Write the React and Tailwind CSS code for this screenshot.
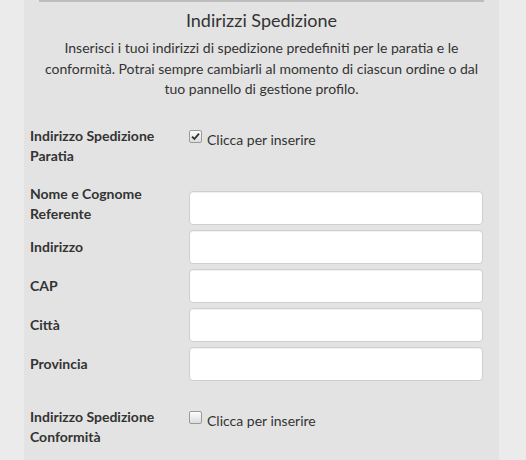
import React from "react";

const fields = ["Indirizzo", "CAP", "Città", "Provincia"];

function Check({ checked }) {
  return (
    <span className="mt-[4px] flex h-[13px] w-[13px] shrink-0 items-center justify-center rounded-[2px] border border-[#9a9a9a] bg-gradient-to-b from-[#fdfdfd] to-[#dcdcdc]">
      {checked && (
        <svg width="9" height="9" viewBox="0 0 9 9">
          <path d="M1 4.6 L3.4 7 L8 1.6" fill="none" stroke="#333" strokeWidth="1.8" />
        </svg>
      )}
    </span>
  );
}

function CheckRow({ label1, label2, checked }) {
  return (
    <div className="flex items-start">
      <div className="w-[159px] text-[14px] font-bold leading-[20px]">
        {label1}
        <br />
        {label2}
      </div>
      <label className="flex items-start gap-[5px]">
        <Check checked={checked} />
        <span className="mt-[5px] text-[14px] leading-[18px]">Clicca per inserire</span>
      </label>
    </div>
  );
}

function Input() {
  return (
    <div className="h-[34px] w-[294px] rounded-[4px] border border-[#cfcfcf] bg-white shadow-[inset_0_1px_1px_rgba(0,0,0,0.06)]" />
  );
}

export default function App() {
  return (
    <div className="min-h-[460px] w-[526px] bg-[#ebebeb] text-[#333]" style={{ fontFamily: "Lato, 'Open Sans', sans-serif" }}>
      <div className="ml-[24px] min-h-[460px] w-[475px] bg-[#e3e3e3] px-[6px]">
        <div className="mx-[9px] h-[2px] bg-[#bdbdbd]" />
        <h2 className="mt-[5px] text-center text-[18px] leading-[26px]">Indirizzi Spedizione</h2>
        <p className="mt-[5px] text-center text-[14px] leading-[20.5px]">
          Inserisci i tuoi indirizzi di spedizione predefiniti per le paratia e le
          <br />
          conformità. Potrai sempre cambiarli al momento di ciascun ordine o dal
          <br />
          tuo pannello di gestione profilo.
        </p>

        <div className="mt-[26px]">
          <CheckRow label1="Indirizzo Spedizione" label2="Paratia" checked />
        </div>

        <div className="mt-[18px] flex flex-col gap-[5px]">
          <div className="flex items-start">
            <div className="w-[159px] text-[14px] font-bold leading-[20px]">
              Nome e Cognome
              <br />
              Referente
            </div>
            <div className="mt-[7px]">
              <Input />
            </div>
          </div>
          {fields.map((f) => (
            <div key={f} className="flex items-center">
              <div className="w-[159px] text-[14px] font-bold leading-[20px]">{f}</div>
              <Input />
            </div>
          ))}
        </div>

        <div className="mt-[26px]">
          <CheckRow label1="Indirizzo Spedizione" label2="Conformità" />
        </div>
      </div>
    </div>
  );
}
